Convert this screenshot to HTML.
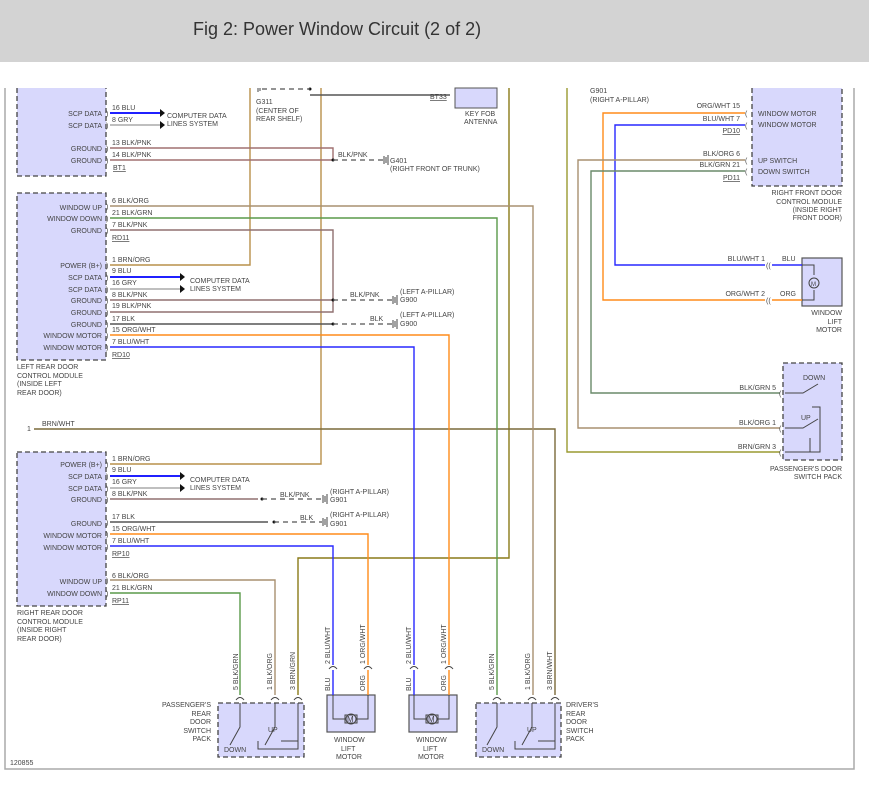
<!DOCTYPE html>
<html><head><meta charset="utf-8"><style>
html,body{margin:0;padding:0;background:#fff;}
svg{display:block}
text{font-family:"Liberation Sans",sans-serif;font-size:7px;fill:#444;}
.r{text-anchor:end}
.u{text-decoration:underline}
.box{fill:#d8d8fc;stroke:#444;stroke-width:1.3;stroke-dasharray:5,3}
.sb{fill:#d8d8fc;stroke:#555;stroke-width:1.2}
.w{fill:none;stroke-width:1.4}
.d{fill:none;stroke:#555;stroke-width:1.2;stroke-dasharray:5,4}
.k{fill:none;stroke:#444;stroke-width:1}
.p{font-size:9px;fill:#333}
</style></head><body>
<svg width="869" height="785" viewBox="0 0 869 785" xmlns="http://www.w3.org/2000/svg">
<rect x="0" y="0" width="869" height="62" fill="#d3d3d3"/>
<text x="193" y="35" style="font-size:18px;fill:#333">Fig 2: Power Window Circuit (2 of 2)</text>

<path d="M5 88V769H854V88" fill="none" stroke="#aaa" stroke-width="1.5"/>

<path class="box" d="M17 88V176H106V88"/>
<rect class="box" x="17" y="193" width="89" height="167"/>
<rect class="box" x="17" y="452" width="89" height="154"/>
<path class="box" d="M752 88V186H842V88"/>
<rect class="box" x="783" y="363" width="59" height="97"/>
<rect class="box" x="218" y="703" width="86" height="54"/>
<rect class="box" x="476" y="703" width="85" height="54"/>
<rect class="sb" x="802" y="258" width="40" height="48"/>
<rect class="sb" x="327" y="695" width="48" height="37"/>
<rect class="sb" x="409" y="695" width="48" height="37"/>
<rect x="455" y="88" width="42" height="20" fill="#d8d8fc" stroke="#555"/>

<g class="w">
<path d="M250 88V265H110" stroke="#b8904a"/>
<path d="M321 88V464H110" stroke="#b8904a"/>
<path d="M509 88V558H298V695" stroke="#8a7a18"/>
<path d="M567 88V452H780" stroke="#9a9a30"/>
<path d="M34 429H555V695" stroke="#7a6a3a"/>
<path d="M110 206H533V695" stroke="#a89070"/>
<path d="M110 218H497V695" stroke="#5a9a4a"/>
<path d="M110 230H333V312H110" stroke="#907070"/>
<path d="M110 300H333" stroke="#907070"/>
<path d="M110 148H333V160H110" stroke="#a07070"/>
<path d="M110 324H333" stroke="#555"/>
<path d="M110 335H449V665" stroke="#ff8c1a"/>
<path d="M110 347H414V665" stroke="#2828ff"/>
<path d="M414 670V695" stroke="#2828ff"/>
<path d="M449 670V695" stroke="#ff8c1a"/>
<path d="M110 113H160" stroke="#2020ff" stroke-width="2"/>
<path d="M110 125H160" stroke="#aaa"/>
<path d="M110 277H180" stroke="#2020ff" stroke-width="2"/>
<path d="M110 289H180" stroke="#aaa"/>
<path d="M110 476H180" stroke="#2020ff" stroke-width="2"/>
<path d="M110 488H180" stroke="#aaa"/>
<path d="M110 499H258" stroke="#907070"/>
<path d="M110 522H268" stroke="#555"/>
<path d="M110 534H368V665" stroke="#ff8c1a"/>
<path d="M368 670V695" stroke="#ff8c1a"/>
<path d="M110 546H333V665" stroke="#2828ff"/>
<path d="M333 670V695" stroke="#2828ff"/>
<path d="M110 580H275V695" stroke="#a89070"/>
<path d="M110 593H240V695" stroke="#5a9a4a"/>
<path d="M745 113H603V300H765" stroke="#ff8c1a"/>
<path d="M772 300H802" stroke="#ff8c1a"/>
<path d="M745 125H615V265H765" stroke="#2828ff"/>
<path d="M772 265H802" stroke="#2828ff"/>
<path d="M745 160H578V428H780" stroke="#a89070"/>
<path d="M745 171H591V393H780" stroke="#6a8a6a"/>
<path d="M310 95H450" stroke="#555"/>
</g>
<g fill="#111">
<path d="M160 109l5 4-5 4z"/><path d="M160 121l5 4-5 4z"/>
<path d="M180 273l5 4-5 4z"/><path d="M180 285l5 4-5 4z"/>
<path d="M180 472l5 4-5 4z"/><path d="M180 484l5 4-5 4z"/>
<circle cx="333" cy="160" r="1.5"/><circle cx="333" cy="300" r="1.5"/><circle cx="333" cy="324" r="1.5"/>
<circle cx="262" cy="499" r="1.5"/><circle cx="274" cy="522" r="1.5"/><circle cx="310" cy="89" r="1.5"/>
</g>
<path class="d" d="M333 160H383M333 300H392M333 324H392M262 499H322M274 522H322M262 89H310"/>
<path class="k" d="M384 156v8M386 157v6M388 155v10M393 296v8M395 297v6M397 295v10M393 320v8M395 321v6M397 319v10M323 495v8M325 496v6M327 494v10M323 518v8M325 519v6M327 517v10M258 88v4M260 88v3"/>

<!-- pin connector marks -->
<g class="p">
<text x="106" y="116">)</text><text x="106" y="128">)</text><text x="106" y="151">)</text><text x="106" y="163">)</text>
<text x="106" y="209">)</text><text x="106" y="221">)</text><text x="106" y="233">)</text>
<text x="106" y="268">)</text><text x="106" y="280">)</text><text x="106" y="292">)</text><text x="106" y="303">)</text><text x="106" y="315">)</text><text x="106" y="327">)</text><text x="106" y="338">)</text><text x="106" y="350">)</text>
<text x="106" y="467">)</text><text x="106" y="479">)</text><text x="106" y="491">)</text><text x="106" y="502">)</text><text x="106" y="525">)</text><text x="106" y="537">)</text><text x="106" y="549">)</text><text x="106" y="583">)</text><text x="106" y="596">)</text>
<text x="745" y="116">(</text><text x="745" y="128">(</text><text x="745" y="163">(</text><text x="745" y="174">(</text>
<text x="766" y="268">((</text><text x="766" y="303">((</text>
<text x="779" y="396">(</text><text x="779" y="431">(</text><text x="779" y="455">(</text>
</g>

<g class="k">
<path d="M802 265h12v10M802 300h12v-10"/><circle cx="814" cy="283" r="5"/>
<path d="M333 695v24h12M368 695v24h-12"/><circle cx="351" cy="719" r="5"/><rect x="345" y="715" width="12" height="8"/>
<path d="M414 695v24h12M449 695v24h-12"/><circle cx="432" cy="719" r="5"/><rect x="426" y="715" width="12" height="8"/>
<path d="M785 393h18l15-9M785 428h18l15-9M785 452h35v-45h-8M810 452v-14"/>
<path d="M240 703v24l-10 18M275 703v24l-10 18M298 703v38h-17M298 741v8h-40v-8"/>
<path d="M497 703v24l-10 18M532 703v24l-10 18M555 703v38h-17M555 741v8h-40v-8"/>
<path d="M236 700q4-5 8 0M271 700q4-5 8 0M294 700q4-5 8 0M329 669q4-5 8 0M364 669q4-5 8 0M410 669q4-5 8 0M445 669q4-5 8 0M493 700q4-5 8 0M528 700q4-5 8 0M551 700q4-5 8 0"/>
</g>
<g font-size="7">
<text x="803" y="380">DOWN</text><text x="801" y="420">UP</text>
<text x="268" y="732">UP</text><text x="224" y="752">DOWN</text>
<text x="527" y="732">UP</text><text x="482" y="752">DOWN</text>
<text x="811" y="286" style="font-size:6px">M</text>
<text x="347" y="722" style="font-size:8px">M</text><text x="428" y="722" style="font-size:8px">M</text>
</g>

<g class="r">
<text x="102" y="116">SCP DATA</text><text x="102" y="128">SCP DATA</text><text x="102" y="151">GROUND</text><text x="102" y="163">GROUND</text>
<text x="102" y="210">WINDOW UP</text><text x="102" y="221">WINDOW DOWN</text><text x="102" y="233">GROUND</text>
<text x="102" y="268">POWER (B+)</text><text x="102" y="280">SCP DATA</text><text x="102" y="292">SCP DATA</text>
<text x="102" y="303">GROUND</text><text x="102" y="315">GROUND</text><text x="102" y="327">GROUND</text>
<text x="102" y="338">WINDOW MOTOR</text><text x="102" y="350">WINDOW MOTOR</text>
<text x="102" y="467">POWER (B+)</text><text x="102" y="479">SCP DATA</text><text x="102" y="491">SCP DATA</text>
<text x="102" y="502">GROUND</text><text x="102" y="526">GROUND</text><text x="102" y="538">WINDOW MOTOR</text><text x="102" y="550">WINDOW MOTOR</text>
<text x="102" y="584">WINDOW UP</text><text x="102" y="596">WINDOW DOWN</text>
<text x="211" y="707">PASSENGER'S</text><text x="211" y="716">REAR</text><text x="211" y="724">DOOR</text><text x="211" y="733">SWITCH</text><text x="211" y="741">PACK</text>
<text x="842" y="195">RIGHT FRONT DOOR</text><text x="842" y="204">CONTROL MODULE</text><text x="842" y="212">(INSIDE RIGHT</text><text x="842" y="220">FRONT DOOR)</text>
<text x="842" y="315">WINDOW</text><text x="842" y="324">LIFT</text><text x="842" y="332">MOTOR</text>
<text x="842" y="471">PASSENGER'S DOOR</text><text x="842" y="479">SWITCH PACK</text>
<text x="740" y="108">ORG/WHT 15</text><text x="740" y="121">BLU/WHT 7</text><text x="740" y="133" class="u">PD10</text>
<text x="740" y="156">BLK/ORG 6</text><text x="740" y="167">BLK/GRN 21</text><text x="740" y="180" class="u">PD11</text>
<text x="765" y="261">BLU/WHT 1</text><text x="765" y="296">ORG/WHT 2</text>
<text x="776" y="390">BLK/GRN 5</text><text x="776" y="425">BLK/ORG 1</text><text x="776" y="449">BRN/GRN 3</text>
</g>
<g>
<text x="758" y="116">WINDOW MOTOR</text><text x="758" y="127">WINDOW MOTOR</text>
<text x="758" y="163">UP SWITCH</text><text x="758" y="174">DOWN SWITCH</text>
<text x="782" y="261">BLU</text><text x="780" y="296">ORG</text>
<text x="590" y="93">G901</text><text x="590" y="102">(RIGHT A-PILLAR)</text>
<text x="465" y="116">KEY FOB</text><text x="464" y="124">ANTENNA</text>
<text x="430" y="99" class="u">BT33</text>
<text x="256" y="104">G311</text><text x="256" y="113">(CENTER OF</text><text x="256" y="121">REAR SHELF)</text>
<text x="167" y="118">COMPUTER DATA</text><text x="167" y="126">LINES SYSTEM</text>
<text x="190" y="283">COMPUTER DATA</text><text x="190" y="291">LINES SYSTEM</text>
<text x="190" y="482">COMPUTER DATA</text><text x="190" y="490">LINES SYSTEM</text>
<text x="112" y="110">16   BLU</text><text x="112" y="122">8   GRY</text>
<text x="112" y="145">13   BLK/PNK</text><text x="112" y="157">14   BLK/PNK</text><text x="113" y="170" class="u">BT1</text>
<text x="338" y="157">BLK/PNK</text><text x="390" y="163">G401</text><text x="390" y="171">(RIGHT FRONT OF TRUNK)</text>
<text x="112" y="203">6    BLK/ORG</text><text x="112" y="215">21   BLK/GRN</text><text x="112" y="227">7   BLK/PNK</text><text x="112" y="240" class="u">RD11</text>
<text x="112" y="262">1   BRN/ORG</text><text x="112" y="273">9   BLU</text><text x="112" y="285">16   GRY</text>
<text x="112" y="297">8   BLK/PNK</text><text x="112" y="308">19    BLK/PNK</text><text x="112" y="321">17   BLK</text>
<text x="112" y="332">15   ORG/WHT</text><text x="112" y="344">7   BLU/WHT</text><text x="112" y="357" class="u">RD10</text>
<text x="350" y="297">BLK/PNK</text><text x="400" y="294">(LEFT A-PILLAR)</text><text x="400" y="302">G900</text>
<text x="370" y="321">BLK</text><text x="400" y="317">(LEFT A-PILLAR)</text><text x="400" y="326">G900</text>
<text x="17" y="369">LEFT REAR DOOR</text><text x="17" y="378">CONTROL MODULE</text><text x="17" y="386">(INSIDE LEFT</text><text x="17" y="395">REAR DOOR)</text>
<text x="27" y="431">1</text><text x="42" y="426">BRN/WHT</text>
<text x="112" y="461">1   BRN/ORG</text><text x="112" y="472">9   BLU</text><text x="112" y="484">16   GRY</text><text x="112" y="496">8   BLK/PNK</text>
<text x="280" y="497">BLK/PNK</text><text x="330" y="494">(RIGHT A-PILLAR)</text><text x="330" y="502">G901</text>
<text x="112" y="519">17   BLK</text><text x="300" y="520">BLK</text><text x="330" y="517">(RIGHT A-PILLAR)</text><text x="330" y="526">G901</text>
<text x="112" y="531">15   ORG/WHT</text><text x="112" y="543">7   BLU/WHT</text><text x="112" y="556" class="u">RP10</text>
<text x="112" y="578">6    BLK/ORG</text><text x="112" y="590">21   BLK/GRN</text><text x="112" y="603" class="u">RP11</text>
<text x="17" y="615">RIGHT REAR DOOR</text><text x="17" y="624">CONTROL MODULE</text><text x="17" y="632">(INSIDE RIGHT</text><text x="17" y="641">REAR DOOR)</text>
<text x="566" y="707">DRIVER'S</text><text x="566" y="716">REAR</text><text x="566" y="724">DOOR</text><text x="566" y="733">SWITCH</text><text x="566" y="741">PACK</text>
<text x="334" y="742">WINDOW</text><text x="341" y="751">LIFT</text><text x="336" y="759">MOTOR</text>
<text x="416" y="742">WINDOW</text><text x="423" y="751">LIFT</text><text x="418" y="759">MOTOR</text>
<text x="10" y="765">120855</text>
</g>
<g>
<text transform="translate(238,690) rotate(-90)">5     BLK/GRN</text>
<text transform="translate(272,690) rotate(-90)">1     BLK/ORG</text>
<text transform="translate(295,690) rotate(-90)">3     BRN/GRN</text>
<text transform="translate(330,664) rotate(-90)">2   BLU/WHT</text>
<text transform="translate(365,664) rotate(-90)">1   ORG/WHT</text>
<text transform="translate(411,664) rotate(-90)">2   BLU/WHT</text>
<text transform="translate(446,664) rotate(-90)">1   ORG/WHT</text>
<text transform="translate(330,691) rotate(-90)">BLU</text>
<text transform="translate(365,691) rotate(-90)">ORG</text>
<text transform="translate(411,691) rotate(-90)">BLU</text>
<text transform="translate(446,691) rotate(-90)">ORG</text>
<text transform="translate(494,690) rotate(-90)">5     BLK/GRN</text>
<text transform="translate(530,690) rotate(-90)">1     BLK/ORG</text>
<text transform="translate(552,690) rotate(-90)">3     BRN/WHT</text>
</g>
</svg>
</body></html>
